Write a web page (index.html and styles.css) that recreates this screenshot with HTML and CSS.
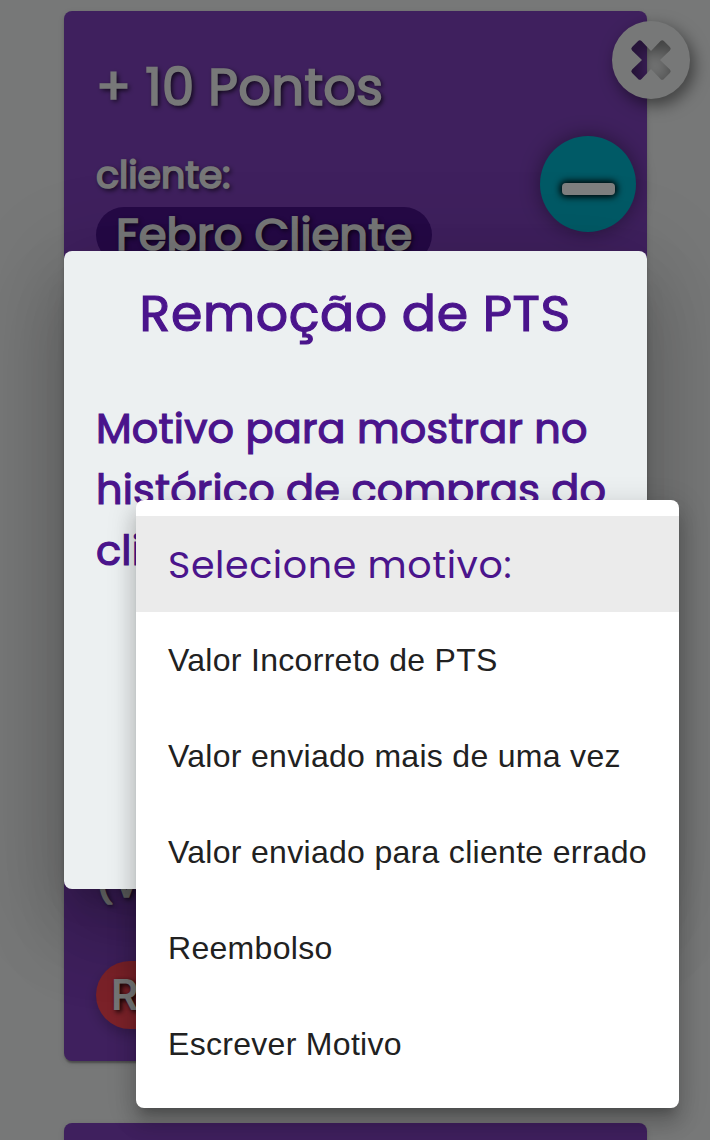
FILE: index.html
```html
<!DOCTYPE html>
<html lang="pt-BR">
<head>
<meta charset="utf-8">
<title>Remoção de PTS</title>
<link rel="stylesheet" href="styles.css">
</head>
<body>
<main class="page">
  <section class="card">
    <h2 class="points"><span>+ 10 Pontos</span></h2>
    <p class="label"><span>cliente:</span></p>
    <div class="client"><span>Febro Cliente</span></div>
    <p class="note">(V</p>
    <button class="remove">R</button>
    <svg class="close" viewBox="0 0 78 78">
      <path fill-rule="evenodd" d="M39 0a39 39 0 1 1 0 78a39 39 0 1 1 0-78z M29.5 20.1Q27.8 18.4 26.1 20.1L20.1 26.1Q18.4 27.8 20.1 29.5L30 39L20.1 48.5Q18.4 50.2 20.1 51.9L26.1 57.9Q27.8 59.6 29.5 57.9L39 48L48.5 57.9Q50.2 59.6 51.9 57.9L57.9 51.9Q59.6 50.2 57.9 48.5L48 39L57.9 29.5Q59.6 27.8 57.9 26.1L51.9 20.1Q50.2 18.4 48.5 20.1L39 30z"/>
    </svg>
    <div class="minus"><i class="bar"></i></div>
  </section>
  <section class="card next"></section>
</main>
<div class="overlay"></div>
<section class="dialog">
  <h1 class="title"><span>Remoção de PTS</span></h1>
  <p class="reason"><span>Motivo para mostrar no</span><br><span>histórico de compras do</span><br><span>cli</span></p>
</section>
<ul class="menu">
  <li class="selected"><span>Selecione motivo:</span></li>
  <li><span>Valor Incorreto de PTS</span></li>
  <li><span>Valor enviado mais de uma vez</span></li>
  <li><span>Valor enviado para cliente errado</span></li>
  <li><span>Reembolso</span></li>
  <li><span>Escrever Motivo</span></li>
</ul>
</body>
</html>
```
FILE: styles.css
```css
* { box-sizing: border-box; }
body {
  margin: 0;
  height: 1140px;
  position: relative;
  overflow: hidden;
  background: #eef0f0;
  font-family: Poppins, Inter, sans-serif;
}
h1, h2, p, ul { margin: 0; padding: 0; }
.page {
  height: 1140px;
  padding: 11px 63.5px 0 64px;
  display: flex;
  flex-direction: column;
  gap: 62px;
  overflow: hidden;
}
.card {
  position: relative;
  flex: none;
  height: 1050px;
  padding: 41px 32px 32px;
  display: flex;
  flex-direction: column;
  align-items: flex-start;
  border-radius: 8px;
  background: #7e41bc;
  color: #eef0f0;
  box-shadow: 0 4px 2px -2px rgba(0,0,0,.2), 0 2px 2px rgba(0,0,0,.14), 0 2px 6px rgba(0,0,0,.12);
  text-shadow: 2px 2px 5px rgba(0,0,0,.9);
}
.card.next { height: 200px; }
.points, .label, .client, .note { font-weight: 400; -webkit-text-stroke: 1.7px currentColor; }
.points { font-size: 51.2px; line-height: 70px; letter-spacing: .3px; }
.label { margin-top: 25px; font-size: 38px; line-height: 56px; letter-spacing: -.1px; }
.client {
  margin-top: 4px;
  width: 336px;
  height: 56px;
  padding-left: 20px;
  border-radius: 28px;
  background: #4a128c;
  font-size: 44.8px;
  line-height: 55px;
  letter-spacing: .1px;
  white-space: nowrap;
}
.note { margin-top: auto; font-size: 38.4px; line-height: 56px; }
.remove {
  margin-top: 49px;
  width: 120px;
  height: 68px;
  padding: 0 15px;
  border: 0;
  border-radius: 34px;
  background: #f64452;
  color: #eef0f0;
  font: 600 42px/64px Inter, sans-serif;
  text-align: left;
  text-shadow: 2px 2px 5px rgba(0,0,0,.9);
  box-shadow: 0 6px 12px rgba(0,0,0,.2);
}
.close {
  position: absolute;
  left: 548px;
  top: 10px;
  width: 78px;
  height: 78px;
  fill: #eef0f0;
  overflow: visible;
  filter: drop-shadow(4px 6px 8px rgba(0,0,0,.5));
}
.minus {
  position: absolute;
  left: 476px;
  top: 125px;
  width: 96px;
  height: 96px;
  display: grid;
  place-items: center;
  padding-top: 9px;
  border-radius: 50%;
  background: #00b4cc;
  box-shadow: 0 0 20px rgba(0,0,0,.4);
}
.bar { width: 53px; height: 12px; border-radius: 4px; background: #fff; box-shadow: 0 0 7px 2px #000; }
.overlay { position: absolute; inset: 0; background: rgba(0,0,0,.5); }
.dialog {
  position: absolute;
  left: 64px;
  top: 251px;
  width: 582.5px;
  height: 638px;
  padding: 32px;
  border-radius: 8px;
  background: #ecf0f1;
  color: #4a148c;
  box-shadow: 0 22px 30px -14px rgba(0,0,0,.2), 0 48px 76px 6px rgba(0,0,0,.14), 0 18px 92px 16px rgba(0,0,0,.12);
  white-space: nowrap;
}
.title, .reason { font-weight: 400; -webkit-text-stroke: 1.2px currentColor; }
.title { text-align: center; font-size: 50.6px; line-height: 62px; letter-spacing: .6px; }
.reason { margin-top: 53px; font-size: 41.4px; line-height: 61px; letter-spacing: .2px; }
.menu {
  position: absolute;
  left: 136px;
  top: 500px;
  width: 542.5px;
  height: 608px;
  padding: 16px 0;
  border-radius: 8px;
  background: #fff;
  list-style: none;
  box-shadow: 0 10px 10px -6px rgba(0,0,0,.2), 0 16px 20px 2px rgba(0,0,0,.14), 0 6px 28px 4px rgba(0,0,0,.12);
}
.menu li {
  display: flex;
  align-items: center;
  height: 96px;
  padding: 0 32px;
  color: #212121;
  font: 32px/48px "Liberation Sans", Arial, sans-serif;
  letter-spacing: .3px;
  white-space: nowrap;
}
.menu .selected {
  padding-top: 1px;
  background: #ebebeb;
  color: #4a148c;
  font: 400 38px/56px Poppins, Inter, sans-serif;
  letter-spacing: .6px;
}
```
